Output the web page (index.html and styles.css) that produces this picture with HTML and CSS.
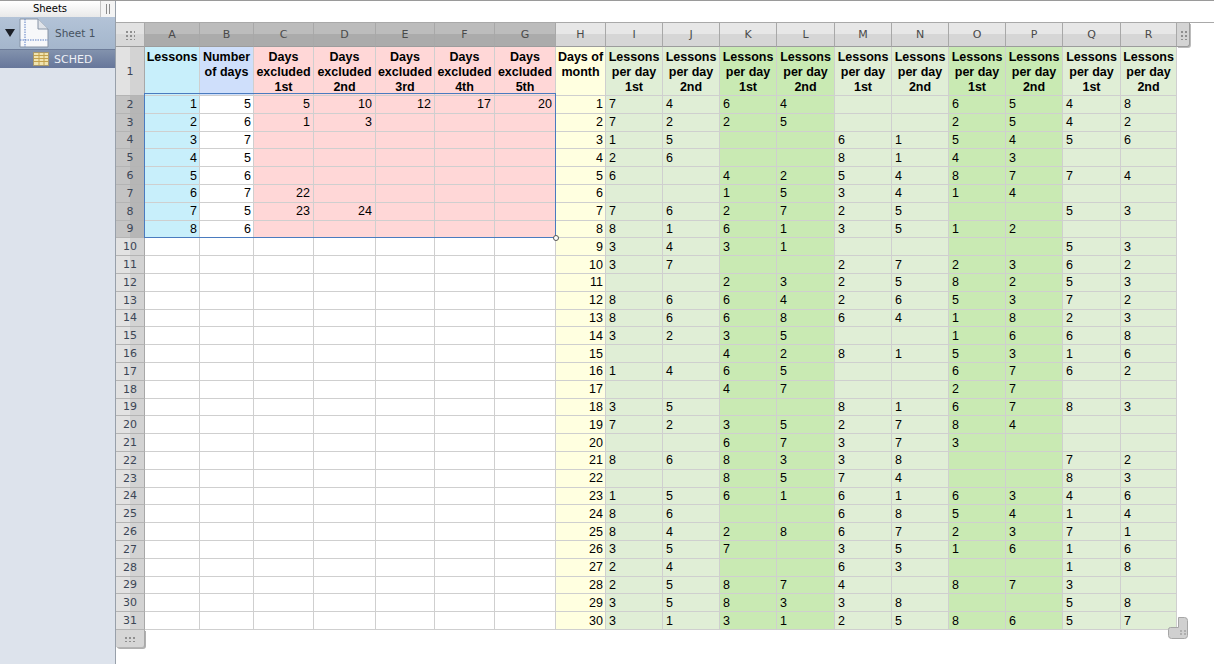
FILE: index.html
```html
<!DOCTYPE html>
<html lang="en">
<head>
<meta charset="utf-8">
<title>Sheets</title>
<link rel="stylesheet" href="styles.css">
</head>
<body>
<div class="app">
<aside class="side">
  <div class="side-head"><span class="side-title">Sheets</span><span class="side-grip"><i></i><i></i></span></div>
  <div class="sheet-row">
    <svg class="tri" width="10" height="9" viewBox="0 0 10 9"><path d="M0 1h10L5 9z" fill="#1b1f26"/></svg>
    <svg class="page" width="30" height="30" viewBox="0 0 30 30"><path d="M1 1h18l10 10v18H1z" fill="#f7f8fa" stroke="#8794a6"/><path d="M19 1v10h10" fill="#dfe3e9" stroke="#8794a6"/><path d="M6 1v28M1 22h28" stroke="#5b7fc4" stroke-dasharray="1.5 1" fill="none"/></svg>
    <span class="sheet-name">Sheet 1</span>
  </div>
  <div class="table-row">
    <svg class="tbl" width="16" height="14" viewBox="0 0 16 14"><rect width="16" height="14" fill="#f0e4b0"/><rect x=".5" y=".5" width="15" height="13" fill="none" stroke="#a8986a"/><path d="M1 3.5h14M1 6.5h14M1 9.5h14M6 1v12M11 1v12" stroke="#c4a24c"/></svg>
    <span class="table-name">SCHED</span>
  </div>
</aside>
<main class="main">
<div class="topbar"></div>
<div class="sheet">
<table class="grid">
<colgroup><col class="w29"><col class="w55"><col class="w54"><col class="w60"><col class="w62"><col class="w59"><col class="w60"><col class="w61"><col class="w50"><col class="w57"><col class="w57"><col class="w57"><col class="w58"><col class="w57"><col class="w57"><col class="w57"><col class="w57"><col class="w58"><col class="w56"><col class="w13"></colgroup>
<thead>
<tr class="letters"><th class="corner"><span class="dots"></span></th><th class="on">A</th><th class="on">B</th><th class="on">C</th><th class="on">D</th><th class="on">E</th><th class="on">F</th><th class="on">G</th><th>H</th><th>I</th><th>J</th><th>K</th><th>L</th><th>M</th><th>N</th><th>O</th><th>P</th><th>Q</th><th>R</th><th class="col-grip"><span class="dots"></span></th></tr>
</thead>
<tbody>
<tr class="titles"><th>1</th><td>Lessons</td><td>Number of days</td><td>Days excluded 1st</td><td>Days excluded 2nd</td><td>Days excluded 3rd</td><td>Days excluded 4th</td><td>Days excluded 5th</td><td>Days of month</td><td>Lessons per day 1st</td><td>Lessons per day 2nd</td><td>Lessons per day 1st</td><td>Lessons per day 2nd</td><td>Lessons per day 1st</td><td>Lessons per day 2nd</td><td>Lessons per day 1st</td><td>Lessons per day 2nd</td><td>Lessons per day 1st</td><td>Lessons per day 2nd</td></tr>
<tr class="sel"><th>2</th><td>1</td><td>5</td><td>5</td><td>10</td><td>12</td><td>17</td><td>20</td><td>1</td><td>7</td><td>4</td><td>6</td><td>4</td><td></td><td></td><td>6</td><td>5</td><td>4</td><td>8</td></tr>
<tr class="sel"><th>3</th><td>2</td><td>6</td><td>1</td><td>3</td><td></td><td></td><td></td><td>2</td><td>7</td><td>2</td><td>2</td><td>5</td><td></td><td></td><td>2</td><td>5</td><td>4</td><td>2</td></tr>
<tr class="sel"><th>4</th><td>3</td><td>7</td><td></td><td></td><td></td><td></td><td></td><td>3</td><td>1</td><td>5</td><td></td><td></td><td>6</td><td>1</td><td>5</td><td>4</td><td>5</td><td>6</td></tr>
<tr class="sel"><th>5</th><td>4</td><td>5</td><td></td><td></td><td></td><td></td><td></td><td>4</td><td>2</td><td>6</td><td></td><td></td><td>8</td><td>1</td><td>4</td><td>3</td><td></td><td></td></tr>
<tr class="sel"><th>6</th><td>5</td><td>6</td><td></td><td></td><td></td><td></td><td></td><td>5</td><td>6</td><td></td><td>4</td><td>2</td><td>5</td><td>4</td><td>8</td><td>7</td><td>7</td><td>4</td></tr>
<tr class="sel"><th>7</th><td>6</td><td>7</td><td>22</td><td></td><td></td><td></td><td></td><td>6</td><td></td><td></td><td>1</td><td>5</td><td>3</td><td>4</td><td>1</td><td>4</td><td></td><td></td></tr>
<tr class="sel"><th>8</th><td>7</td><td>5</td><td>23</td><td>24</td><td></td><td></td><td></td><td>7</td><td>7</td><td>6</td><td>2</td><td>7</td><td>2</td><td>5</td><td></td><td></td><td>5</td><td>3</td></tr>
<tr class="sel"><th>9</th><td>8</td><td>6</td><td></td><td></td><td></td><td></td><td></td><td>8</td><td>8</td><td>1</td><td>6</td><td>1</td><td>3</td><td>5</td><td>1</td><td>2</td><td></td><td></td></tr>
<tr><th>10</th><td></td><td></td><td></td><td></td><td></td><td></td><td></td><td>9</td><td>3</td><td>4</td><td>3</td><td>1</td><td></td><td></td><td></td><td></td><td>5</td><td>3</td></tr>
<tr><th>11</th><td></td><td></td><td></td><td></td><td></td><td></td><td></td><td>10</td><td>3</td><td>7</td><td></td><td></td><td>2</td><td>7</td><td>2</td><td>3</td><td>6</td><td>2</td></tr>
<tr><th>12</th><td></td><td></td><td></td><td></td><td></td><td></td><td></td><td>11</td><td></td><td></td><td>2</td><td>3</td><td>2</td><td>5</td><td>8</td><td>2</td><td>5</td><td>3</td></tr>
<tr><th>13</th><td></td><td></td><td></td><td></td><td></td><td></td><td></td><td>12</td><td>8</td><td>6</td><td>6</td><td>4</td><td>2</td><td>6</td><td>5</td><td>3</td><td>7</td><td>2</td></tr>
<tr><th>14</th><td></td><td></td><td></td><td></td><td></td><td></td><td></td><td>13</td><td>8</td><td>6</td><td>6</td><td>8</td><td>6</td><td>4</td><td>1</td><td>8</td><td>2</td><td>3</td></tr>
<tr><th>15</th><td></td><td></td><td></td><td></td><td></td><td></td><td></td><td>14</td><td>3</td><td>2</td><td>3</td><td>5</td><td></td><td></td><td>1</td><td>6</td><td>6</td><td>8</td></tr>
<tr><th>16</th><td></td><td></td><td></td><td></td><td></td><td></td><td></td><td>15</td><td></td><td></td><td>4</td><td>2</td><td>8</td><td>1</td><td>5</td><td>3</td><td>1</td><td>6</td></tr>
<tr><th>17</th><td></td><td></td><td></td><td></td><td></td><td></td><td></td><td>16</td><td>1</td><td>4</td><td>6</td><td>5</td><td></td><td></td><td>6</td><td>7</td><td>6</td><td>2</td></tr>
<tr><th>18</th><td></td><td></td><td></td><td></td><td></td><td></td><td></td><td>17</td><td></td><td></td><td>4</td><td>7</td><td></td><td></td><td>2</td><td>7</td><td></td><td></td></tr>
<tr><th>19</th><td></td><td></td><td></td><td></td><td></td><td></td><td></td><td>18</td><td>3</td><td>5</td><td></td><td></td><td>8</td><td>1</td><td>6</td><td>7</td><td>8</td><td>3</td></tr>
<tr><th>20</th><td></td><td></td><td></td><td></td><td></td><td></td><td></td><td>19</td><td>7</td><td>2</td><td>3</td><td>5</td><td>2</td><td>7</td><td>8</td><td>4</td><td></td><td></td></tr>
<tr><th>21</th><td></td><td></td><td></td><td></td><td></td><td></td><td></td><td>20</td><td></td><td></td><td>6</td><td>7</td><td>3</td><td>7</td><td>3</td><td></td><td></td><td></td></tr>
<tr><th>22</th><td></td><td></td><td></td><td></td><td></td><td></td><td></td><td>21</td><td>8</td><td>6</td><td>8</td><td>3</td><td>3</td><td>8</td><td></td><td></td><td>7</td><td>2</td></tr>
<tr><th>23</th><td></td><td></td><td></td><td></td><td></td><td></td><td></td><td>22</td><td></td><td></td><td>8</td><td>5</td><td>7</td><td>4</td><td></td><td></td><td>8</td><td>3</td></tr>
<tr><th>24</th><td></td><td></td><td></td><td></td><td></td><td></td><td></td><td>23</td><td>1</td><td>5</td><td>6</td><td>1</td><td>6</td><td>1</td><td>6</td><td>3</td><td>4</td><td>6</td></tr>
<tr><th>25</th><td></td><td></td><td></td><td></td><td></td><td></td><td></td><td>24</td><td>8</td><td>6</td><td></td><td></td><td>6</td><td>8</td><td>5</td><td>4</td><td>1</td><td>4</td></tr>
<tr><th>26</th><td></td><td></td><td></td><td></td><td></td><td></td><td></td><td>25</td><td>8</td><td>4</td><td>2</td><td>8</td><td>6</td><td>7</td><td>2</td><td>3</td><td>7</td><td>1</td></tr>
<tr><th>27</th><td></td><td></td><td></td><td></td><td></td><td></td><td></td><td>26</td><td>3</td><td>5</td><td>7</td><td></td><td>3</td><td>5</td><td>1</td><td>6</td><td>1</td><td>6</td></tr>
<tr><th>28</th><td></td><td></td><td></td><td></td><td></td><td></td><td></td><td>27</td><td>2</td><td>4</td><td></td><td></td><td>6</td><td>3</td><td></td><td></td><td>1</td><td>8</td></tr>
<tr><th>29</th><td></td><td></td><td></td><td></td><td></td><td></td><td></td><td>28</td><td>2</td><td>5</td><td>8</td><td>7</td><td>4</td><td></td><td>8</td><td>7</td><td>3</td><td></td></tr>
<tr><th>30</th><td></td><td></td><td></td><td></td><td></td><td></td><td></td><td>29</td><td>3</td><td>5</td><td>8</td><td>3</td><td>3</td><td>8</td><td></td><td></td><td>5</td><td>8</td></tr>
<tr><th>31</th><td></td><td></td><td></td><td></td><td></td><td></td><td></td><td>30</td><td>3</td><td>1</td><td>3</td><td>1</td><td>2</td><td>5</td><td>8</td><td>6</td><td>5</td><td>7</td></tr>
<tr class="foot"><th class="row-grip"><span class="dots"></span></th></tr>
</tbody>
</table>
<div class="selection"><span class="sel-handle"></span></div>
<svg class="corner-grip" width="20" height="22" viewBox="0 0 20 22"><path d="M10.5 .5h6a3 3 0 0 1 3 3v15a3 3 0 0 1-3 3h-13a3 3 0 0 1-3-3v-6a2 2 0 0 1 2-2h8z" fill="#d0d0d0" stroke="#a6a6a6"/><path d="M12 14h2M16 14h2M12 17h2M16 17h2" stroke="#8d8d8d"/></svg>
</div>
</main>
</div>
</body>
</html>
```
FILE: styles.css
```css
* { box-sizing: border-box; }
html, body { margin: 0; height: 100%; }
body { background: #fff; overflow: hidden; font-family: "Liberation Sans", Arial, sans-serif; }
.app { display: flex; height: 664px; border-top: 1px solid #9a9a9a; }

.side { width: 116px; flex: none; background: #dde3ec; border-right: 1px solid #98a0aa; }
.side-head { display: flex; height: 16px; background: linear-gradient(#ffffff, #e9e9e9); }
.side-title { flex: 1; text-align: center; font: 10px/16px "DejaVu Sans", sans-serif; color: #000; }
.side-grip { width: 15px; display: flex; justify-content: center; gap: 2px; padding-top: 3px; border-left: 1px solid #c4c4c4; background: #f4f4f4; }
.side-grip i { width: 1px; height: 10px; background: #8b8b8b; }
.sheet-row { display: flex; align-items: center; height: 32px; background: linear-gradient(#b3c3d7, #a4b6cc); }
.tri { margin-left: 5px; margin-top: -2px; }
.page { margin-left: 4px; }
.sheet-name { margin-left: 6px; font: 10.5px "DejaVu Sans", sans-serif; color: #46525f; }
.table-row { display: flex; align-items: center; height: 19px; padding-left: 33px; background: linear-gradient(#8292ad, #66769a); border-top: 1px solid #6d7c99; }
.table-name { margin-left: 5px; font: 11px "DejaVu Sans", sans-serif; color: #eef1f6; }

.main { flex: 1; min-width: 0; }
.topbar { height: 22px; border-bottom: 1px solid #a9a9a9; }
.sheet { position: relative; }

.grid { border-collapse: separate; border-spacing: 0; table-layout: fixed; width: 1074px; }
.w13 { width: 13px; } .w29 { width: 29px; } .w50 { width: 50px; } .w54 { width: 54px; } .w55 { width: 55px; }
.w56 { width: 56px; } .w57 { width: 57px; } .w58 { width: 58px; } .w59 { width: 59px; } .w60 { width: 60px; }
.w61 { width: 61px; } .w62 { width: 62px; }

.grid th { padding: 0; font: 400 11px "DejaVu Sans", sans-serif; color: #3c4656; text-align: center; }
.letters th { height: 24px; background: linear-gradient(#e7e7e7 50%, #d6d6d6 50%); border-right: 1px solid #a8a8a8; border-bottom: 1px solid #9c9c9c; color: #4a4a4a; }
.letters th.on { background: linear-gradient(#bcbcbc 50%, #ababab 50%); }
.letters .corner { background: linear-gradient(#e2e2e2 50%, #d8d8d8 50%); }
.letters .col-grip { background: #d4d4d4; border-right: 1px solid #9c9c9c; border-radius: 0 0 3px 0; box-shadow: 1px 1px 0 #bbb; }
.dots { display: inline-block; width: 10px; height: 10px; vertical-align: middle; background: radial-gradient(circle, #8f8f8f 0 1px, transparent 1px) 0 0 / 4px 4px; }
.col-grip .dots { width: 7px; }

.grid tbody th { background: linear-gradient(to right, #e2e2e2 50%, #d3d3d3 50%); border-right: 1px solid #a8a8a8; border-bottom: 1px solid #b4b4b4; }
.grid tbody .sel th { background: linear-gradient(to right, #c4c4c4 50%, #b6b6b6 50%); }
.grid tbody .foot th { height: 14px; background: #d6d6d6; border-radius: 0 0 3px 3px; box-shadow: 1px 1px 0 #b0b0b0; }
.foot .dots { height: 6px; width: 12px; }
.foot { font-size: 0; }

.grid tbody tr { height: 17.8px; }
.grid td { padding: 0 3px; border-right: 1px solid #cfcfcf; border-bottom: 1px solid #cfcfcf; font-size: 12.5px; line-height: 14px; color: #000; overflow: hidden; white-space: nowrap; text-align: left; }
.grid td:nth-child(-n+9) { text-align: right; padding-right: 3px; }
.grid td:nth-child(-n+3), .grid td:nth-child(9) { padding-right: 2px; }
.grid td:nth-child(9) { background: #ffffe0; }
.grid td:nth-child(10), .grid td:nth-child(11), .grid td:nth-child(14), .grid td:nth-child(15), .grid td:nth-child(18), .grid td:nth-child(19) { background: #e0eed6; }
.grid td:nth-child(12), .grid td:nth-child(13), .grid td:nth-child(16), .grid td:nth-child(17) { background: #c9eab3; }
.sel td:nth-child(2) { background: #c8effb; }
.sel td:nth-child(n+4):nth-child(-n+8) { background: #ffd7d7; }

.grid tbody .titles { height: 47px; }
.titles th { vertical-align: middle; }
.grid .titles td { padding: 3px 0 0; text-align: center; vertical-align: top; white-space: normal; font-weight: 700; font-size: 12.5px; line-height: 15px; }
.titles td:nth-child(2) { background: #c8effb; }
.titles td:nth-child(3) { background: #cfdffb; }
.titles td:nth-child(n+4):nth-child(-n+8) { background: #ffd7d7; }
.titles td:nth-child(9) { background: #ffffe0; }

.selection { position: absolute; left: 28px; top: 70px; width: 412px; height: 145px; border: 1px solid #4a7bbf; }
.sel-handle { position: absolute; right: -4px; bottom: -4px; width: 6px; height: 6px; border: 1px solid #555; border-radius: 50%; background: #fff; }
.corner-grip { position: absolute; left: 1052px; top: 594px; }
```
